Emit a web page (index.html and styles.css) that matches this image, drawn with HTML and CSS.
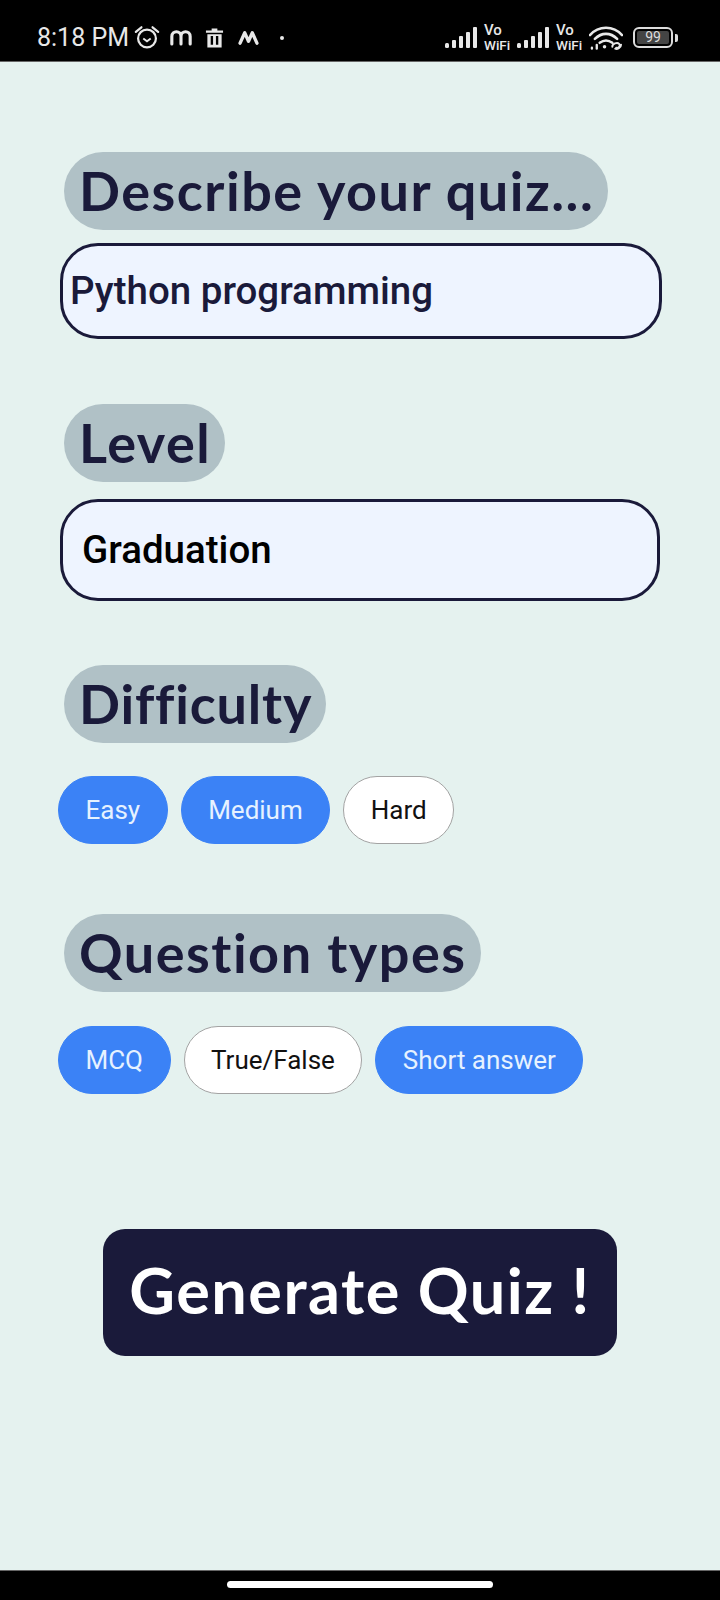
FILE: index.html
```html
<!DOCTYPE html>
<html lang="en">
<head>
    <meta charset="UTF-8">
    <title>Quiz Generator</title>
    <link rel="stylesheet" href="styles.css">
</head>
<body>
    <header class="status-bar">
        <div class="status-left">
            <span class="clock">8:18 PM</span>
            <svg class="ico-alarm" width="26" height="25" viewBox="0 0 28 26" fill="none" stroke="#e8e8e8" stroke-width="2.4">
                <circle cx="14" cy="14" r="9.6"/>
                <path d="M10 14l4 3 4-3" stroke-width="2"/>
                <path d="M2 7l6-5M26 7l-6-5" stroke-linecap="round"/>
            </svg>
            <svg class="ico-m" width="22" height="17" viewBox="0 0 24 18" fill="none" stroke="#e8e8e8" stroke-width="3.4" stroke-linecap="round">
                <path d="M2 16V8c0-7 10-7 10 0v8M12 8c0-7 10-7 10 0v8"/>
            </svg>
            <svg class="ico-trash" width="19" height="20" viewBox="0 0 20 20" fill="#e8e8e8">
                <path d="M7 0h6v2h6v2.500H1V2h6zM2.500 6h15v14h-15zM6 8v9h2.500V8zM11.500 8v9H14V8z" fill-rule="evenodd"/>
            </svg>
            <svg class="ico-mi" width="21" height="15" viewBox="0 0 22 16" fill="none" stroke="#e8e8e8" stroke-width="3.6" stroke-linecap="round" stroke-linejoin="round">
                <path d="M2 14L7 3l4 9 4-9 5 11"/>
            </svg>
            <span class="dot"></span>
        </div>
        <div class="status-right">
            <svg class="signal" width="32" height="21" viewBox="0 0 32 21" fill="#e8e8e8">
                <rect x="0" y="16" width="4" height="5" rx="1.500"/>
                <rect x="7" y="13" width="4" height="8" rx="1"/>
                <rect x="14" y="9" width="4" height="12" rx="1"/>
                <rect x="21" y="5" width="4" height="16" rx="1"/>
                <rect x="28" y="0" width="4" height="21" rx="1"/>
            </svg>
            <span class="vowifi"><span>Vo</span><span>WiFi</span></span>
            <svg class="signal" width="32" height="21" viewBox="0 0 32 21" fill="#e8e8e8">
                <rect x="0" y="16" width="4" height="5" rx="1.500"/>
                <rect x="7" y="13" width="4" height="8" rx="1"/>
                <rect x="14" y="9" width="4" height="12" rx="1"/>
                <rect x="21" y="5" width="4" height="16" rx="1"/>
                <rect x="28" y="0" width="4" height="21" rx="1"/>
            </svg>
            <span class="vowifi"><span>Vo</span><span>WiFi</span></span>
            <svg class="wifi" width="34" height="24" viewBox="0 0 35 24" fill="none" stroke="#e8e8e8" stroke-width="2.600" stroke-linecap="round">
                <path d="M1 9C10-1 25-1 34 9"/>
                <path d="M6 13c7-7 16-7 23 0"/>
                <path d="M11 17c4-3 9-3 13 0"/>
                <circle cx="16" cy="21" r="1.800" fill="#e8e8e8" stroke="none"/>
                <path d="M3 22v1M8 19v4" stroke-width="2.400"/>
                <path d="M24 21c0-3 5-5 7-3 2 2-1 5-3 4M33 19c0 3-4 5-6 4" stroke-width="2"/>
            </svg>
            <span class="battery"><span class="battery-level">99</span></span>
            <span class="battery-nub"></span>
        </div>
    </header>

    <main class="page">
        <section class="block block-describe">
            <h2 class="label">Describe your quiz...</h2>
            <div class="field field-topic">Python programming</div>
        </section>

        <section class="block block-level">
            <h2 class="label">Level</h2>
            <div class="field field-level">Graduation</div>
        </section>

        <section class="block block-difficulty">
            <h2 class="label">Difficulty</h2>
            <div class="chips">
                <span class="chip on">Easy</span>
                <span class="chip on">Medium</span>
                <span class="chip">Hard</span>
            </div>
        </section>

        <section class="block block-types">
            <h2 class="label">Question types</h2>
            <div class="chips">
                <span class="chip on">MCQ</span>
                <span class="chip">True/False</span>
                <span class="chip on">Short answer</span>
            </div>
        </section>

        <button class="generate" type="button">Generate Quiz !</button>
    </main>

    <footer class="nav-bar"><span class="home-pill"></span></footer>
</body>
</html>
```

FILE: styles.css
```css
* {
    box-sizing: border-box;
}

body {
    margin: 0;
    height: 1600px;
    display: flex;
    flex-direction: column;
    background: #e5f2ef;
    font-family: Roboto, sans-serif;
    overflow: hidden;
}

/* status bar */
.status-bar {
    height: 62px;
    flex: none;
    display: flex;
    justify-content: space-between;
    align-items: center;
    padding: 14px 42px 0 37px;
    background: #000;
    border-bottom: 1px solid #666;
    color: #e8e8e8;
}

.status-left,
.status-right {
    display: flex;
    align-items: center;
}

.clock {
    font-size: 25px;
    width: 97px;
}

.ico-m {
    margin-left: 10px;
}

.ico-trash {
    margin-left: 13px;
}

.ico-mi {
    margin-left: 14px;
}

.dot {
    width: 4px;
    height: 4px;
    margin-left: 21px;
    border-radius: 50%;
    background: #e8e8e8;
}

.vowifi {
    display: flex;
    flex-direction: column;
    width: 27px;
    margin: 0 6px 0 7px;
    font-size: 13.500px;
    line-height: 14px;
    font-weight: 500;
}

.vowifi span:first-child {
    font-size: 15px;
    line-height: 15px;
}

.battery {
    width: 40px;
    height: 21px;
    margin-left: 10px;
    padding: 2px;
    border: 2px solid #dcdcdc;
    border-radius: 6px;
    display: flex;
}

.battery-level {
    flex: 1;
    background: #444;
    border-radius: 2px;
    color: #ddd;
    font-size: 14px;
    line-height: 13px;
    text-align: center;
}

.battery-nub {
    width: 3px;
    height: 8px;
    margin-left: 2px;
    background: #dcdcdc;
    border-radius: 0 2px 2px 0;
}

/* form */
.page {
    flex: 1;
    display: flex;
    flex-direction: column;
    padding-top: 90px;
}

.label {
    display: inline-block;
    height: 78px;
    margin: 0 0 0 64px;
    padding: 0 14px 0 15px;
    border-radius: 39px;
    background: #b0c1c6;
    color: #1a1a3a;
    font-family: Lato, sans-serif;
    font-size: 54px;
    font-weight: 700;
    letter-spacing: 1.500px;
    line-height: 77px;
}

.block-difficulty .label {
    letter-spacing: 0.800px;
}

.field {
    height: 96px;
    margin: 13px 58px 0 60px;
    padding-left: 7px;
    border: 3px solid #1a1a3a;
    border-radius: 38px;
    background: #eef4ff;
    color: #1a1a3a;
    font-size: 38.500px;
    font-weight: 500;
    line-height: 90px;
}

.field-level {
    height: 102px;
    margin: 17px 60px 0 60px;
    padding-left: 19px;
    color: #000;
    line-height: 96px;
}

.block-level {
    margin-top: 65px;
}

.block-difficulty {
    margin-top: 64px;
}

.block-types {
    margin-top: 70px;
}

.chips {
    display: flex;
    gap: 13px;
    margin: 33px 0 0 58px;
}

.block-types .chips {
    margin-top: 34px;
}

.chip {
    height: 68px;
    padding: 0 26.500px;
    border: 1.500px solid #a3a3a3;
    border-radius: 34px;
    background: #fff;
    color: #111;
    font-size: 26px;
    line-height: 67px;
}

.chip.on {
    border-color: #3b82f6;
    background: #3b82f6;
    color: #e6f2ff;
}

.generate {
    align-self: flex-start;
    width: 514px;
    height: 127px;
    margin: 135px 0 0 103px;
    padding: 0 0 7px;
    border: 0;
    border-radius: 22px;
    background: #1a1a3a;
    color: #fff;
    font-family: Lato, sans-serif;
    font-size: 63px;
    font-weight: 700;
    letter-spacing: 1.500px;
}

/* nav bar */
.nav-bar {
    height: 30px;
    flex: none;
    display: flex;
    justify-content: center;
    padding-top: 10px;
    background: #000;
    border-top: 1px solid #666;
}

.home-pill {
    width: 266px;
    height: 7px;
    border-radius: 4px;
    background: #fff;
}
```
